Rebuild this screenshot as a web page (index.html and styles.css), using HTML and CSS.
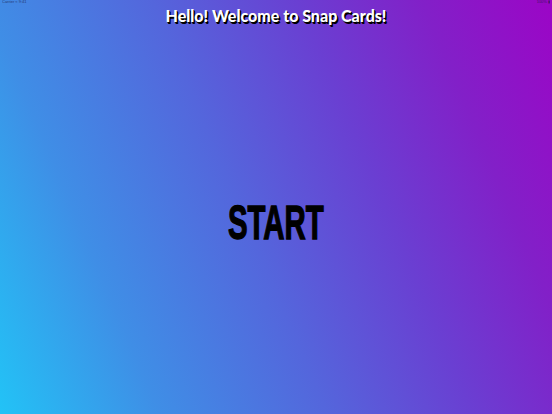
FILE: index.html
```html
<!DOCTYPE html>
<html>
<head>
<meta charset="utf-8">
<link rel="stylesheet" href="styles.css">
</head>
<body>
<div class="screen">
  <div class="status">
    <span class="status-left">Carrier &#8776; 9:41</span>
    <span class="status-right">100% &#9646;</span>
  </div>
  <header class="title">Hello! Welcome to Snap Cards!</header>
  <main class="stage">
    <button class="start">START</button>
  </main>
</div>
</body>
</html>
```
FILE: styles.css
```css
html, body {
  margin: 0;
  padding: 0;
}
.screen {
  width: 552px;
  height: 414px;
  position: relative;
  overflow: hidden;
  display: flex;
  flex-direction: column;
  background: linear-gradient(67deg, #22c3f6 0%, #3f8ee6 22%, #5466dc 45%, #6a3fd2 65%, #8220c8 82%, #9c05c6 100%);
}
.status {
  position: absolute;
  top: 0;
  left: 0;
  right: 0;
  display: flex;
  justify-content: space-between;
  font-family: "Liberation Sans", sans-serif;
  font-size: 4px;
  line-height: 4px;
  color: #1a1a40;
  padding: 0 2px;
  opacity: 0.7;
}
.title {
  height: 30px;
  display: flex;
  align-items: center;
  justify-content: center;
  font-family: Lato, "Noto Sans", sans-serif;
  font-weight: 900;
  font-size: 16px;
  color: #ffffff;
  text-shadow: 1px 1px 0 #000, 1.5px 1.5px 0 #000;
}
.stage {
  flex: 1;
  display: flex;
  align-items: center;
  justify-content: center;
}
.start {
  background: none;
  border: none;
  padding: 0;
  font-family: "Liberation Sans", sans-serif;
  font-weight: 700;
  font-size: 49px;
  line-height: 1;
  color: #000;
  -webkit-text-stroke: 1.4px #000;
  transform: scaleX(0.6);
}
```
